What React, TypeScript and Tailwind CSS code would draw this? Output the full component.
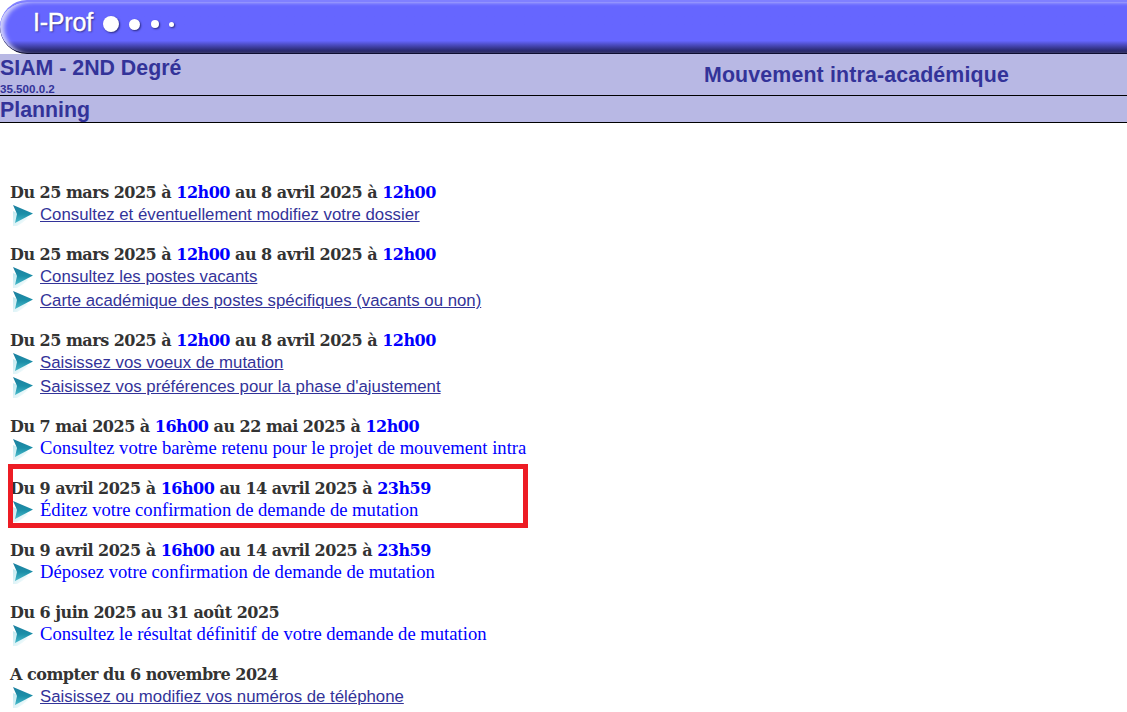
import React from 'react';

const sections = [
  { head: ['Du 25 mars 2025 à ', '12h00', ' au 8 avril 2025 à ', '12h00'], links: [{ t: 'Consultez et éventuellement modifiez votre dossier', on: true }] },
  { head: ['Du 25 mars 2025 à ', '12h00', ' au 8 avril 2025 à ', '12h00'], links: [{ t: 'Consultez les postes vacants', on: true }, { t: 'Carte académique des postes spécifiques (vacants ou non)', on: true }] },
  { head: ['Du 25 mars 2025 à ', '12h00', ' au 8 avril 2025 à ', '12h00'], links: [{ t: 'Saisissez vos voeux de mutation', on: true }, { t: "Saisissez vos préférences pour la phase d'ajustement", on: true }] },
  { head: ['Du 7 mai 2025 à ', '16h00', ' au 22 mai 2025 à ', '12h00'], links: [{ t: 'Consultez votre barème retenu pour le projet de mouvement intra', on: false }] },
  { head: ['Du 9 avril 2025 à ', '16h00', ' au 14 avril 2025 à ', '23h59'], links: [{ t: 'Éditez votre confirmation de demande de mutation', on: false }], boxed: true },
  { head: ['Du 9 avril 2025 à ', '16h00', ' au 14 avril 2025 à ', '23h59'], links: [{ t: 'Déposez votre confirmation de demande de mutation', on: false }] },
  { head: ['Du 6 juin 2025 au 31 août 2025'], links: [{ t: 'Consultez le résultat définitif de votre demande de mutation', on: false }] },
  { head: ['A compter du 6 novembre 2024'], links: [{ t: 'Saisissez ou modifiez vos numéros de téléphone', on: true }] },
];

function Arrow() {
  return (
    <svg width="24" height="24" viewBox="0 0 24 24" className="shrink-0">
      <defs>
        <linearGradient id="arrowFill" x1="0" y1="0" x2="0" y2="1">
          <stop offset="0" stopColor="#1d7f9f" />
          <stop offset="0.5" stopColor="#1b8fa8" />
          <stop offset="1" stopColor="#4bbccc" />
        </linearGradient>
        <linearGradient id="arrowGlow" x1="0" y1="0" x2="1" y2="1">
          <stop offset="0" stopColor="#bfe8ef" />
          <stop offset="1" stopColor="#ffffff" />
        </linearGradient>
      </defs>
      <path d="M3 8 L18 15 L12 20 L7 23 L3 23 Z" fill="url(#arrowGlow)" />
      <path d="M3 2 L23 10.5 L5 20 L7 11 Z" fill="url(#arrowFill)" />
    </svg>
  );
}

const dot = 'rounded-full bg-white shadow-[1px_1px_2px_#2a2a80]';

export default function App() {
  return (
    <div className="min-h-screen bg-white font-['Liberation_Sans',Arial,sans-serif] overflow-hidden">
      <div className="h-[54px] bg-white">
        <div className="h-[54px] rounded-l-[27px] bg-gradient-to-b from-[#6666ff] via-[#6666ff] via-[76%] to-[#1c1c50] border-t-2 border-t-[#8080ff] border-b border-b-[#0d0d30] shadow-[inset_5px_1px_4px_-1px_#d4d4fa] flex items-center pl-[33px] pb-[10px]">
          <span className="text-white text-[25px] leading-none tracking-[-0.2px] [-webkit-text-stroke:0.4px_white] [text-shadow:1px_1px_2px_#2a2a80]">I-Prof</span>
          <span className={`ml-[10px] w-[16px] h-[16px] mt-[3px] ${dot}`}></span>
          <span className={`ml-[10px] w-[11px] h-[11px] mt-[3px] ${dot}`}></span>
          <span className={`ml-[11px] w-[8px] h-[8px] mt-[3px] ${dot}`}></span>
          <span className={`ml-[10px] w-[5px] h-[5px] mt-[3px] ${dot}`}></span>
        </div>
      </div>
      <div className="h-[42px] bg-[#b8b8e4] border-b border-black flex text-[#333399]">
        <div className="w-[704px] shrink-0">
          <div className="text-[21.33px] font-bold leading-[26px] mt-[1px]">SIAM - 2ND Degré</div>
          <div className="text-[11.6px] font-bold leading-[13px] mt-[1px]">35.500.0.2</div>
        </div>
        <div className="text-[21.33px] font-bold leading-[26px] mt-[8px] whitespace-nowrap tracking-[0.15px]">Mouvement intra-académique</div>
      </div>
      <div className="h-[27px] bg-[#b8b8e4] border-b border-black text-[#333399] text-[21.33px] font-bold leading-[28px]">Planning</div>

      <div className="pt-[59px] pl-[10px] flex flex-col gap-[18px]">
        {sections.map((s, i) => (
          <div key={i} className="relative">
            {s.boxed && <div className="absolute left-[-2px] top-[-14px] w-[520px] h-[64px] border-[5px] border-[#ed1c24]"></div>}
            <div className="h-[22px] leading-[22px] text-[16px] font-bold text-[#333333] font-['DejaVu_Serif',serif] whitespace-nowrap tracking-[-0.5px]">
              {s.head.map((h, j) => <span key={j} className={j % 2 === 1 ? 'text-[#0000ff]' : ''}>{h}</span>)}
            </div>
            {s.links.map((l, j) => (
              <div key={j} className={`flex items-center ${j > 0 ? 'mt-[2px]' : ''} h-[22px]`}>
                <Arrow />
                <a href="#" className={l.on
                  ? 'ml-[6px] text-[16.8px] leading-[22px] text-[#333399] underline whitespace-nowrap'
                  : "ml-[6px] mb-[2px] text-[18.62px] leading-[22px] text-[#0000ff] font-['Liberation_Serif',serif] whitespace-nowrap"}>{l.t}</a>
              </div>
            ))}
          </div>
        ))}
      </div>
    </div>
  );
}
